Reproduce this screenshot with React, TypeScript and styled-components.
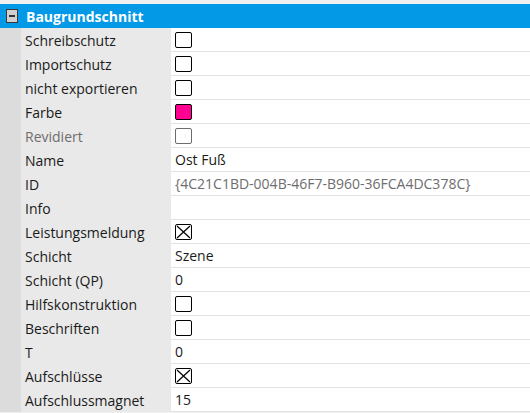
import React from 'react';
import styled, {createGlobalStyle} from "styled-components";

type Value =
    | {kind: 'check'; checked: boolean; disabled?: boolean}
    | {kind: 'color'; color: string}
    | {kind: 'text'; text: string; muted?: boolean};

type Prop = {
    label: string;
    disabled?: boolean;
    value: Value;
}

const props: Prop[] = [
    {label: 'Schreibschutz', value: {kind: 'check', checked: false}},
    {label: 'Importschutz', value: {kind: 'check', checked: false}},
    {label: 'nicht exportieren', value: {kind: 'check', checked: false}},
    {label: 'Farbe', value: {kind: 'color', color: '#ff0090'}},
    {label: 'Revidiert', disabled: true, value: {kind: 'check', checked: false, disabled: true}},
    {label: 'Name', value: {kind: 'text', text: 'Ost Fuß'}},
    {label: 'ID', value: {kind: 'text', text: '{4C21C1BD-004B-46F7-B960-36FCA4DC378C}', muted: true}},
    {label: 'Info', value: {kind: 'text', text: ''}},
    {label: 'Leistungsmeldung', value: {kind: 'check', checked: true}},
    {label: 'Schicht', value: {kind: 'text', text: 'Szene'}},
    {label: 'Schicht (QP)', value: {kind: 'text', text: '0'}},
    {label: 'Hilfskonstruktion', value: {kind: 'check', checked: false}},
    {label: 'Beschriften', value: {kind: 'check', checked: false}},
    {label: 'T', value: {kind: 'text', text: '0'}},
    {label: 'Aufschlüsse', value: {kind: 'check', checked: true}},
    {label: 'Aufschlussmagnet', value: {kind: 'text', text: '15'}},
];

function ValueCell({value}: {value: Value}) {
    if (value.kind === 'check') {
        return (
            <CheckBox $disabled={value.disabled}>
                {value.checked && (
                    <svg width="15" height="14" viewBox="0 0 15 14">
                        <path d="M1 1 L14 13 M14 1 L1 13" stroke="#000" strokeWidth="1.2" fill="none"/>
                    </svg>
                )}
            </CheckBox>
        )
    }
    if (value.kind === 'color') {
        return <Swatch $color={value.color}/>
    }
    return <ValueText $muted={value.muted}>{value.text}</ValueText>
}

function App() {
    return (
        <>
            <GlobalStyle/>
            <Grid>
                <Header>
                    <Collapse/>
                    <HeaderTitle>Baugrundschnitt</HeaderTitle>
                </Header>
                {props.map((p) => (
                    <Row key={p.label}>
                        <Gutter/>
                        <Label $disabled={p.disabled}>{p.label}</Label>
                        <Cell>
                            <ValueCell value={p.value}/>
                        </Cell>
                    </Row>
                ))}
            </Grid>
        </>
    )
}

export default App;

const GlobalStyle = createGlobalStyle`
  html, body {
    margin: 0;
    padding: 0;
    background: #f0f0f0;
  }
  body {
    font-family: "Open Sans", "Noto Sans", sans-serif;
  }
`

const RowHeight = "24px";

const Grid = styled.div`
  width: 530px;
  padding-top: 4px;
  display: flex;
  flex-direction: column;
`
const Header = styled.div`
  height: ${RowHeight};
  background: #0399e6;
  display: flex;
  align-items: center;
`
const Collapse = styled.span`
  position: relative;
  box-sizing: border-box;
  width: 12px;
  height: 14px;
  margin-left: 6px;
  border: 1px solid #3a3a3a;
  background: #d0d0d0;
  &::after {
    content: "";
    position: absolute;
    left: 2px;
    right: 2px;
    top: 5px;
    height: 2px;
    background: #333;
  }
`
const HeaderTitle = styled.span`
  margin-left: 8px;
  color: #fff;
  font-weight: bold;
  font-size: 14px;
`
const Row = styled.div`
  height: ${RowHeight};
  display: flex;
`
const Gutter = styled.div`
  width: 21px;
  background: #dcdcdc;
`
const Label = styled.div<{ $disabled?: boolean }>`
  width: 150px;
  padding-left: 4px;
  box-sizing: border-box;
  background: #e9e9e9;
  color: ${p => p.$disabled ? '#6d6d6d' : '#1a1a1a'};
  font-size: 14px;
  display: flex;
  align-items: center;
`
const Cell = styled.div`
  flex: 1;
  background: #fff;
  border-bottom: 1px solid #e3e3e3;
  padding-left: 4px;
  display: flex;
  align-items: center;
`
const CheckBox = styled.div<{ $disabled?: boolean }>`
  box-sizing: border-box;
  width: 17px;
  height: 16px;
  border: 1px solid ${p => p.$disabled ? '#6d6d6d' : '#000'};
  border-radius: 2px;
  background: #fff;
  display: flex;
  align-items: center;
  justify-content: center;
`
const Swatch = styled.div<{ $color: string }>`
  box-sizing: border-box;
  width: 17px;
  height: 16px;
  border: 1px solid #000;
  border-radius: 2px;
  background: ${p => p.$color};
`
const ValueText = styled.span<{ $muted?: boolean }>`
  color: ${p => p.$muted ? '#6d6d6d' : '#1a1a1a'};
  font-size: 14px;
`
